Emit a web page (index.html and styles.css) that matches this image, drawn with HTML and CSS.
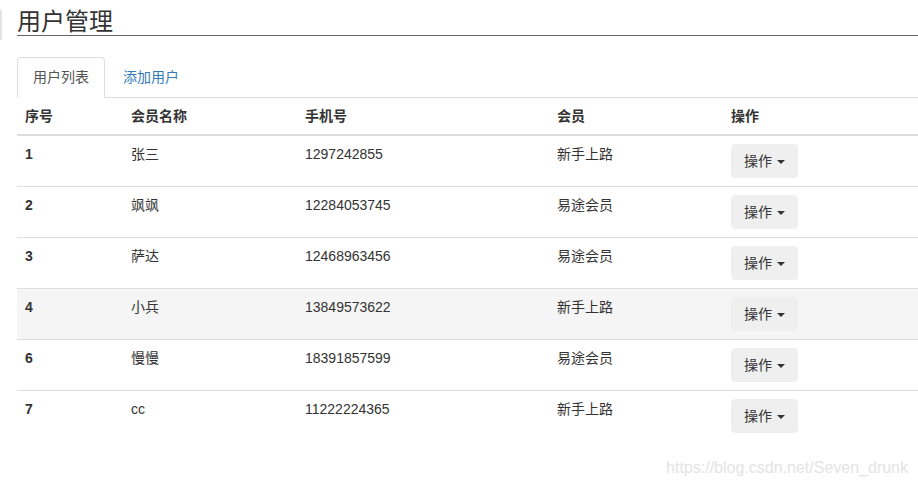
FILE: index.html
```html
<!DOCTYPE html>
<html lang="zh-CN">
<head>
    <meta charset="UTF-8">
    <title>用户管理</title>
    <link rel="stylesheet" href="styles.css">
</head>
<body>
    <div class="page">
        <div class="page-head">
            <h1>用户管理</h1>
        </div>

        <ul class="tabs">
            <li class="active"><a href="#">用户列表</a></li>
            <li><a href="#">添加用户</a></li>
        </ul>

        <table class="user-table">
            <colgroup>
                <col style="width: 106px">
                <col style="width: 174px">
                <col style="width: 252px">
                <col style="width: 174px">
                <col>
            </colgroup>
            <thead>
                <tr>
                    <th>序号</th>
                    <th>会员名称</th>
                    <th>手机号</th>
                    <th>会员</th>
                    <th>操作</th>
                </tr>
            </thead>
            <tbody id="user-rows"></tbody>
        </table>
    </div>

    <div class="watermark">https://blog.csdn.net/Seven_drunk</div>

    <script>
        const users = [
            { id: 1, name: '张三', phone: '1297242855', level: '新手上路' },
            { id: 2, name: '飒飒', phone: '12284053745', level: '易途会员' },
            { id: 3, name: '萨达', phone: '12468963456', level: '易途会员' },
            { id: 4, name: '小兵', phone: '13849573622', level: '新手上路', hover: true },
            { id: 6, name: '慢慢', phone: '18391857599', level: '易途会员' },
            { id: 7, name: 'cc', phone: '11222224365', level: '新手上路' }
        ];

        const tbody = document.getElementById('user-rows');
        users.forEach(u => {
            const tr = document.createElement('tr');
            if (u.hover) tr.className = 'hover';
            tr.innerHTML =
                `<td class="num">${u.id}</td>` +
                `<td>${u.name}</td>` +
                `<td>${u.phone}</td>` +
                `<td>${u.level}</td>` +
                `<td><button class="op-btn">操作 <span class="caret"></span></button></td>`;
            tbody.appendChild(tr);
        });
    </script>
</body>
</html>
```

FILE: styles.css
```css
body {
    margin: 0;
    font-family: "Liberation Sans", Arial, "Noto Sans CJK SC", sans-serif;
    font-size: 14px;
    line-height: 20px;
    color: #333;
    background-color: #fff;
}

.page {
    padding-left: 17px;
}

.page-head {
    position: relative;
    padding-top: 9px;
}

.page-head::before {
    content: "";
    position: absolute;
    left: -17px;
    top: 10px;
    width: 2px;
    height: 30px;
    background-color: #e3e3e3;
}

.page-head h1 {
    margin: 0;
    font-size: 24px;
    font-weight: normal;
    line-height: 26px;
    color: #333;
    border-bottom: 1px solid #666;
}

.tabs {
    list-style: none;
    margin: 21px 0 0;
    padding: 0;
    display: flex;
    border-bottom: 1px solid #ddd;
}

.tabs li {
    margin-bottom: -1px;
    margin-right: 2px;
}

.tabs a {
    display: block;
    padding: 9px 15px 10px;
    line-height: 20px;
    font-size: 14px;
    color: #337ab7;
    text-decoration: none;
    border: 1px solid transparent;
    border-radius: 4px 4px 0 0;
}

.tabs li.active a {
    color: #555;
    border-color: #ddd;
    border-bottom-color: #fff;
    background-color: #fff;
}

.user-table {
    width: 901px;
    border-collapse: collapse;
    table-layout: fixed;
}

.user-table th,
.user-table td {
    padding: 8px;
    text-align: left;
    vertical-align: top;
    line-height: 20px;
}

.user-table th {
    font-weight: bold;
    border-bottom: 2px solid #ddd;
}

.user-table td {
    border-top: 1px solid #ddd;
}

.user-table tbody tr:first-child td {
    border-top: 0;
}

.user-table .num {
    font-weight: bold;
}

.user-table tr.hover td {
    background-color: #f5f5f5;
}

.op-btn {
    font-family: inherit;
    font-size: 14px;
    line-height: 20px;
    color: #333;
    padding: 6px 12px;
    background-color: #efefef;
    border: 1px solid #efefef;
    border-radius: 4px;
    cursor: pointer;
}

.caret {
    display: inline-block;
    width: 0;
    height: 0;
    margin-left: 1px;
    vertical-align: middle;
    border-top: 4px solid #333;
    border-left: 4px solid transparent;
    border-right: 4px solid transparent;
}

.watermark {
    position: absolute;
    right: 10px;
    top: 458px;
    font-size: 16px;
    color: #e4e4e4;
    font-family: "Liberation Sans", Arial, sans-serif;
}
```
